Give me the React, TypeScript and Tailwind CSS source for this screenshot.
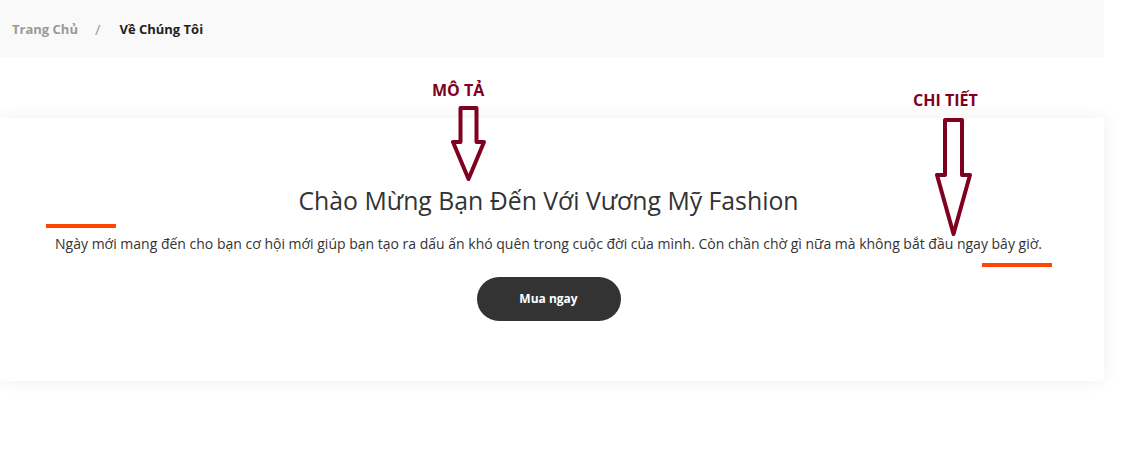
export default function App() {
  return (
    <main className="relative min-h-[449px] bg-white font-['Open_Sans',sans-serif]">
      <div className="w-[1104px]">
        <Breadcrumb />
        <Welcome />
      </div>
      <Annotations />
    </main>
  );
}

function Breadcrumb() {
  return (
    <nav className="flex h-[57px] items-center bg-[#f9f9f9] pl-3 pt-[2px] text-[13px] font-bold">
      <span className="text-[#999]">Trang Chủ</span>
      <span className="ml-[17px] mr-[19px] text-[15px] font-normal text-[#999]">/</span>
      <span className="text-[#222]">Về Chúng Tôi</span>
    </nav>
  );
}

function Welcome() {
  return (
    <section className="mt-[61px] flex h-[263px] flex-col items-center bg-white pr-[7px] pt-[65px] shadow-[0_0_16px_rgba(0,0,0,0.07)]">
      <h1 className="text-[24.8px] leading-[34px] text-[#333]">
        Chào Mừng Bạn Đến Với Vương Mỹ Fashion
      </h1>
      <p className="mt-[17px] text-[14px] leading-[20px] text-[#333]">
        Ngày mới mang đến cho bạn cơ hội mới giúp bạn tạo ra dấu ấn khó quên trong cuộc đời của mình. Còn chần chờ gì nữa mà không bắt đầu ngay bây giờ.
      </p>
      <button className="mt-[23px] h-[44px] w-[144px] rounded-full bg-[#333] text-[12px] font-bold text-white">
        Mua ngay
      </button>
    </section>
  );
}

function Arrow(props: { width: number; height: number; shaft: number; neck: number }) {
  const { width: w, height: h, shaft, neck } = props;
  const l = (w - shaft) / 2;
  const r = l + shaft;
  return (
    <svg width={w + 4} height={h + 4} viewBox={`-2 -2 ${w + 4} ${h + 4}`}>
      <polygon
        points={`${l},0 ${r},0 ${r},${neck} ${w},${neck} ${w / 2},${h} 0,${neck} ${l},${neck}`}
        fill="none"
        stroke="#800020"
        strokeWidth="4"
        strokeLinejoin="round"
      />
    </svg>
  );
}

function Annotations() {
  return (
    <>
      <div className="absolute left-[432px] top-[78px] text-[16px] font-bold text-[#800020]">MÔ TẢ</div>
      <div className="absolute left-[451px] top-[106px]">
        <Arrow width={31} height={71} shaft={16} neck={34} />
      </div>

      <div className="absolute left-[913px] top-[88px] text-[16px] font-bold text-[#800020]">CHI TIẾT</div>
      <div className="absolute left-[935px] top-[118px]">
        <Arrow width={33} height={114} shaft={17} neck={55} />
      </div>

      <div className="absolute left-[46px] top-[224px] h-[4px] w-[70px] bg-[#ff4500]" />
      <div className="absolute left-[982px] top-[263px] h-[4px] w-[70px] bg-[#ff4500]" />
    </>
  );
}
